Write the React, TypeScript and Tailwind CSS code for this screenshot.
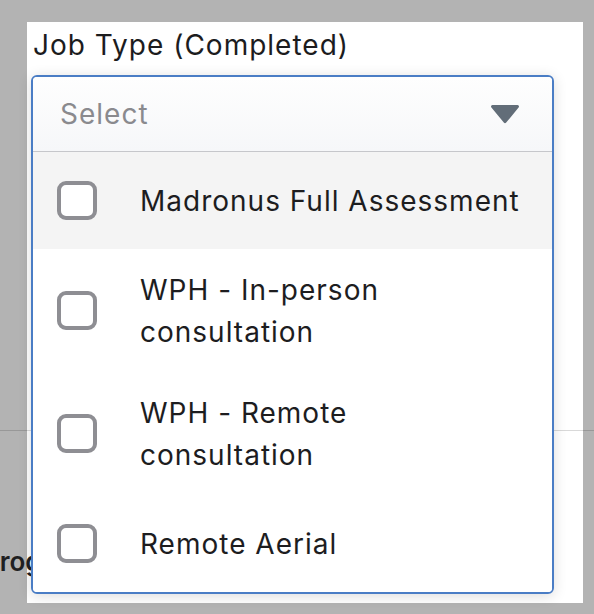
import React from "react";

const options = [
  { label: "Madronus Full Assessment", tall: false, active: true },
  { label: "WPH - In-person consultation", tall: true, active: false },
  { label: "WPH - Remote consultation", tall: true, active: false },
  { label: "Remote Aerial", tall: false, active: false },
];

const Checkbox = () => (
  <span className="block h-[39px] w-[40px] shrink-0 rounded-[9px] border-4 border-[#8e8e93] bg-white" />
);

const App = () => {
  return (
    <div className="relative h-[614px] w-[594px] overflow-hidden bg-[#b3b3b3] font-['Inter','Noto_Sans',sans-serif] tracking-[1px]">
      <div className="pl-[27px] pt-[22px]">
        <div className="relative h-[581px] w-[556px] bg-white pt-[5px]">
          <h3 className="pl-[6px] text-[28px] leading-[36px] text-[#1c1c1e]">
            Job Type (Completed)
          </h3>

          {/* dropdown popover */}
          <div className="relative z-20 ml-[4px] mt-[12px] w-[523px] overflow-hidden rounded-[6px] border-2 border-[#4a7dc5] bg-white shadow-[0_2px_14px_rgba(0,0,0,0.14)]">
            <div className="flex h-[75px] items-center justify-between border-b border-[#c6c7cb] bg-gradient-to-b from-[#fefefe] to-[#f6f7f9] pl-[27px] pr-[33px]">
              <span className="text-[28px] text-[#8a8a8e]">Select</span>
              <svg width="28" height="19" viewBox="0 0 28 19">
                <path d="M1.5 0h25a1.5 1.5 0 0 1 1.1 2.5L15.2 17.6a1.6 1.6 0 0 1-2.4 0L0.4 2.5A1.5 1.5 0 0 1 1.5 0z" fill="#626d78" />
              </svg>
            </div>
            {options.map((o) => (
              <div
                key={o.label}
                className={`flex items-center gap-[43px] pl-[24px] ${o.tall ? "h-[123px]" : "h-[97px]"} ${o.active ? "bg-[#f4f4f4]" : "bg-white"}`}
              >
                <Checkbox />
                <span className="max-w-[384px] text-[28px] leading-[42px] text-[#1d1d1f]">
                  {o.label}
                </span>
              </div>
            ))}
          </div>
        </div>
      </div>

      {/* page content behind the sheet */}
      <div className="absolute inset-x-0 top-[430px] z-10 h-px bg-black/15" />
      <p className="absolute left-[-17px] top-[546px] z-10 text-[26px] font-semibold leading-[32px] tracking-normal text-[#1f1f22]">
        Progress
      </p>
    </div>
  );
};

export default App;
